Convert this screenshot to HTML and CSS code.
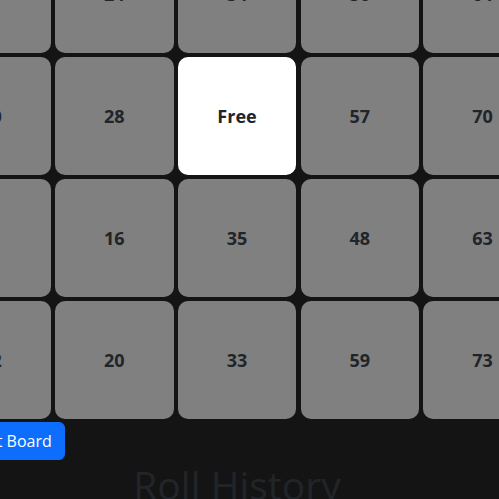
FILE: index.html
```html
<!DOCTYPE html>
<html lang="en">
<head>
<meta charset="utf-8">
<title>Bingo</title>
<link rel="stylesheet" href="styles.css">
</head>
<body>
<div class="page">
  <div class="board">
    <div class="cell">3</div><div class="cell">22</div><div class="cell">41</div><div class="cell">52</div><div class="cell">67</div>
    <div class="cell">7</div><div class="cell">24</div><div class="cell">34</div><div class="cell">56</div><div class="cell">64</div>
    <div class="cell">10</div><div class="cell">28</div><div class="cell free">Free</div><div class="cell">57</div><div class="cell">70</div>
    <div class="cell">5</div><div class="cell">16</div><div class="cell">35</div><div class="cell">48</div><div class="cell">63</div>
    <div class="cell">12</div><div class="cell">20</div><div class="cell">33</div><div class="cell">59</div><div class="cell">73</div>
  </div>
  <div class="controls">
    <button class="btn">Reset Board</button>
  </div>
  <h2 class="title">Roll History</h2>
</div>
</body>
</html>
```

FILE: styles.css
```css
html, body {
  margin: 0;
  padding: 0;
  background: #141414;
  overflow: hidden;
  font-family: "Open Sans", "Noto Sans", sans-serif;
}
.page {
  width: 609.5px;
  margin-left: -67.75px;
  margin-top: -187px;
}
.board {
  display: grid;
  grid-template-columns: repeat(5, 118.5px);
  grid-template-rows: repeat(5, 118px);
  column-gap: 4.25px;
  row-gap: 4px;
}
.cell {
  background: #808080;
  border-radius: 10px;
  display: flex;
  align-items: center;
  justify-content: center;
  font-size: 18px;
  font-weight: 700;
  color: #212529;
}
.cell.free {
  background: #ffffff;
}
.controls {
  display: flex;
  padding-top: 3px;
  padding-left: 16px;
}
.btn {
  font-family: inherit;
  font-size: 16px;
  line-height: 24px;
  padding: 6px 12px;
  height: 38px;
  border: 1px solid #0d6efd;
  border-radius: 6px;
  background: #0d6efd;
  color: #ffffff;
}
.title {
  margin: 2px 0 0;
  text-align: center;
  font-size: 39px;
  font-weight: 500;
  line-height: 1.2;
  color: #212529;
}
```
